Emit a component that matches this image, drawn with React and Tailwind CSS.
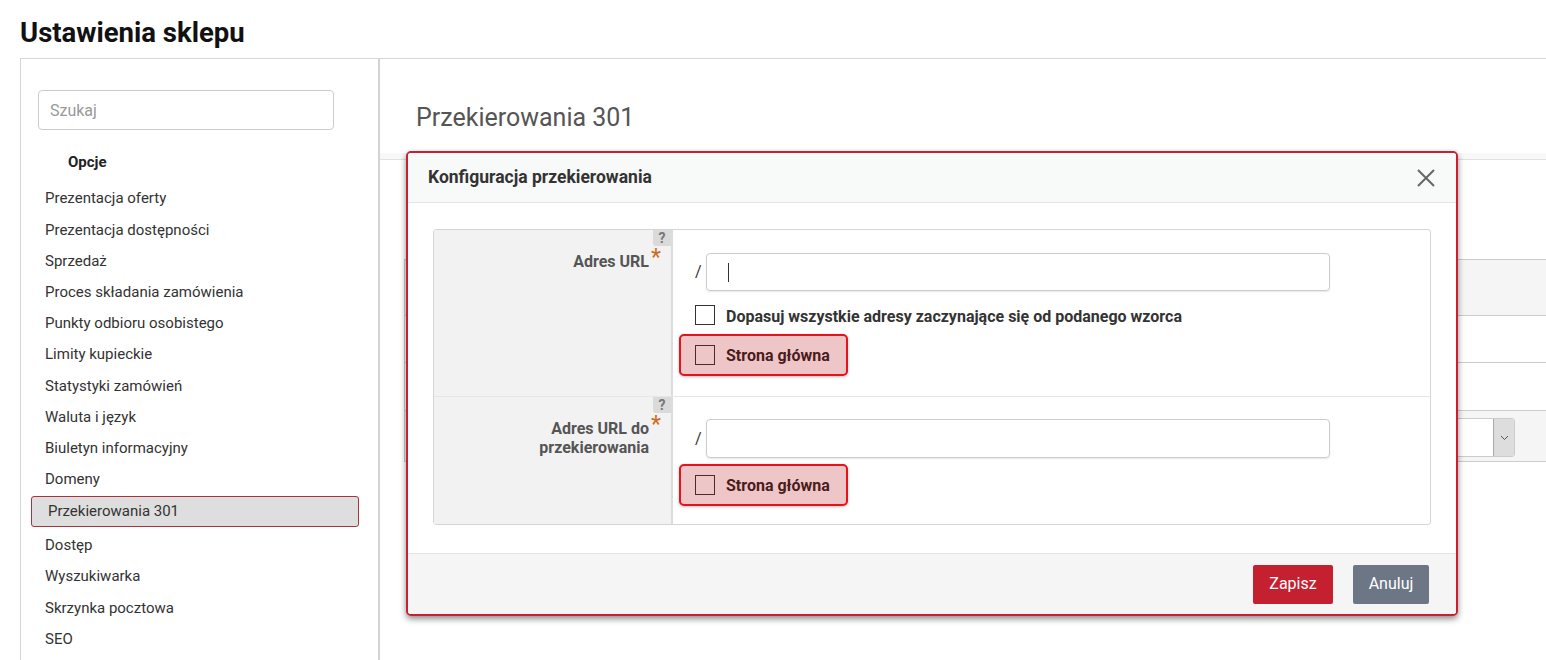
import React from "react";

const items = [
  "Prezentacja oferty",
  "Prezentacja dostępności",
  "Sprzedaż",
  "Proces składania zamówienia",
  "Punkty odbioru osobistego",
  "Limity kupieckie",
  "Statystyki zamówień",
  "Waluta i język",
  "Biuletyn informacyjny",
  "Domeny",
  "Przekierowania 301",
  "Dostęp",
  "Wyszukiwarka",
  "Skrzynka pocztowa",
  "SEO",
];

function Badge() {
  return (
    <div className="absolute top-0 right-0 w-[18px] h-4 bg-[#dadada] rounded-bl-[3px] text-[14px] font-bold text-[#777] leading-4 text-center">
      ?
    </div>
  );
}

function Star() {
  return (
    <span className="absolute left-full top-[-6px] ml-[2px] text-[#d2691e] text-[23px] leading-none font-normal">
      *
    </span>
  );
}

function Highlight() {
  return (
    <div className="-ml-4 w-[169px] h-[42px] flex items-center gap-[11px] pl-[14px] bg-[#efc6c7] border-2 border-[#e8121c] rounded-[5px] shadow-[0_1px_3px_rgba(0,0,0,0.25)]">
      <div className="w-5 h-5 border border-[#4a2a2a]" />
      <span className="mt-[2px] text-[16px] font-bold text-[#4a1c1c]">Strona główna</span>
    </div>
  );
}

export default function App() {
  return (
    <div className="relative w-[1546px] h-[660px] overflow-hidden bg-white font-['Roboto',sans-serif] text-[#333]">
      <h1 className="h-[58px] pl-5 pt-4 text-[27.5px] leading-[34px] font-bold text-[#111]">
        Ustawienia sklepu
      </h1>
      <div className="ml-5 flex h-[602px] border-t border-l border-[#d6d6d6]">
        <aside className="w-[359px] shrink-0 border-r-2 border-[#d3d3d3]">
          <input
            className="block mt-[31px] ml-[17px] w-[296px] h-10 border border-[#ccc] rounded-[4px] pl-[11px] text-[16px] text-[#333] placeholder:text-[#999] outline-none"
            placeholder="Szukaj"
          />
          <div className="mt-[22px] mb-[10px] pl-[47px] text-[15px] leading-[21.4px] font-bold text-[#222]">
            Opcje
          </div>
          <ul>
            {items.map((it) =>
              it === "Przekierowania 301" ? (
                <li
                  key={it}
                  className="mt-px mb-[3px] ml-[10px] mr-[19px] h-[31px] bg-[#dedede] border border-[#a8323e] rounded-[3px] pl-4 leading-[29px] text-[15px] text-[#333]"
                >
                  {it}
                </li>
              ) : (
                <li key={it} className="h-[31.2px] pl-6 leading-[31.2px] text-[15px] text-[#333]">
                  {it}
                </li>
              )
            )}
          </ul>
        </aside>
        <main className="flex-1 min-w-0 pl-6">
          <h2 className="pt-[44px] pl-3 text-[25px] leading-[30px] text-[#555]">Przekierowania 301</h2>
          <div className="mt-[20px] -ml-6 h-[7px] bg-[#f8f8f8] border-b border-[#e2e2e2]" />
          <div className="mt-[99px] border-l border-[#ccc]">
            <div className="h-[57px] bg-[#f5f5f5] border-t border-b border-[#ccc]" />
            <div className="h-[47px] border-b border-[#ccc]" />
            <div className="h-[48px] border-b border-[#ccc]" />
            <div className="h-[51px] bg-[#f5f5f5] border-b border-[#ccc] flex">
              <div className="ml-auto mr-[31px] mt-[7px] w-[300px] h-[39px] flex border border-[#ccc] rounded-[3px] bg-white">
                <div className="ml-auto w-[21px] bg-[#ddd] border-l border-[#aaa] flex items-center justify-center">
                  <svg width="9" height="6" viewBox="0 0 9 6">
                    <path d="M1 1l3.5 3.5L8 1" fill="none" stroke="#555" strokeWidth="1" />
                  </svg>
                </div>
              </div>
            </div>
          </div>
        </main>
      </div>

      <div className="absolute left-[406px] top-[151px] w-[1052px] h-[465px] border-2 border-[#c8202f] rounded-[5px] bg-white shadow-[0_3px_6px_rgba(0,0,0,0.45)] flex flex-col overflow-hidden">
        <div className="h-[50px] shrink-0 bg-[#f8f9f9] border-b border-[#e3e3e3] flex items-center justify-between pl-5 pr-[21px]">
          <span className="text-[17.5px] font-bold text-[#333]">Konfiguracja przekierowania</span>
          <svg width="18" height="18" viewBox="0 0 18 18">
            <path d="M1 1L17 17M17 1L1 17" stroke="#666" strokeWidth="2" fill="none" />
          </svg>
        </div>
        <div className="flex-1 pt-[26px] px-[25px]">
          <div className="border border-[#d5d5d5] rounded-[3px]">
            <div className="flex border-b border-[#e6e6e6]">
              <div className="relative w-[239px] shrink-0 bg-[#f2f2f2] border-r-2 border-[#dcdcdc] pt-[22px] pr-[22px] text-right text-[16px] font-bold text-[#555] leading-[19px]">
                <Badge />
                <span className="relative">
                  Adres URL
                  <Star />
                </span>
              </div>
              <div className="flex-1 pl-[22px] pt-[23px] pb-5">
                <div className="flex items-center h-[38px]">
                  <span className="w-[11px] text-[16px] text-[#333]">/</span>
                  <div className="w-[624px] h-[38px] border border-[#ccc] rounded-[4px] shadow-[0_1px_2px_rgba(0,0,0,0.1)] flex items-center">
                    <div className="ml-[21px] w-px h-[19px] bg-[#333]" />
                  </div>
                </div>
                <div className="mt-[14px] h-5 flex items-center gap-[11px]">
                  <div className="w-5 h-5 border border-[#333] bg-white" />
                  <span className="mt-1 text-[16px] leading-5 font-bold text-[#333]">
                    Dopasuj wszystkie adresy zaczynające się od podanego wzorca
                  </span>
                </div>
                <div className="mt-[9px]">
                  <Highlight />
                </div>
              </div>
            </div>
            <div className="flex">
              <div className="relative w-[239px] shrink-0 bg-[#f2f2f2] border-r-2 border-[#dcdcdc] pt-[22px] pr-[22px] text-right text-[16px] font-bold text-[#555] leading-[19px]">
                <Badge />
                <span className="relative">
                  Adres URL do
                  <Star />
                </span>
                <br />
                przekierowania
              </div>
              <div className="flex-1 pl-[22px] pt-[22px] pb-[18px]">
                <div className="flex items-center h-[39px]">
                  <span className="w-[11px] text-[16px] text-[#333]">/</span>
                  <div className="w-[624px] h-[39px] border border-[#ccc] rounded-[4px] shadow-[0_1px_2px_rgba(0,0,0,0.1)]" />
                </div>
                <div className="mt-[6px]">
                  <Highlight />
                </div>
              </div>
            </div>
          </div>
        </div>
        <div className="h-[61px] shrink-0 border-t border-[#e3e3e3] bg-[#f5f5f5] flex items-center justify-end gap-5 pr-[27px]">
          <button className="w-20 h-[39px] rounded-[2px] bg-[#c4202f] text-white text-[16px]">Zapisz</button>
          <button className="w-[76px] h-[39px] rounded-[2px] bg-[#6c7685] text-white text-[16px]">Anuluj</button>
        </div>
      </div>
    </div>
  );
}
